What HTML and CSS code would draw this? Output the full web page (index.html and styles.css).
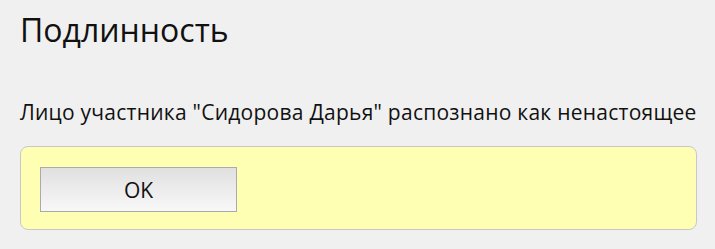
FILE: index.html
```html
<!DOCTYPE html>
<html lang="ru">
<head>
    <meta charset="UTF-8">
    <meta name="viewport" content="width=device-width, initial-scale=1.0">
    <title>Подлинность</title>
    <link rel="stylesheet" href="styles.css">
</head>
<body>
    <div class="dialog">
        <h1 class="title">Подлинность</h1>
        <p class="message">Лицо участника "Сидорова Дарья" распознано как ненастоящее</p>
        <div class="actions">
            <button class="ok-button">OK</button>
        </div>
    </div>
</body>
</html>
```

FILE: styles.css
```css
body {
    margin: 0;
    background-color: #f0f0f0;
    font-family: 'Open Sans', sans-serif;
    color: #111;
}
.dialog {
    padding: 8px 18px 0 20px;
}
.title {
    margin: 0;
    font-size: 32px;
    font-weight: normal;
    line-height: 44px;
}
.message {
    margin: 47px 0 0 0;
    font-size: 21px;
    letter-spacing: 0.25px;
    line-height: 26px;
    white-space: nowrap;
}
.actions {
    margin-top: 21px;
    padding: 20px 19px 17px 19px;
    background-color: #ffffb4;
    border: 1px solid #c8c8c8;
    border-radius: 8px;
}
.ok-button {
    display: block;
    width: 197px;
    height: 45px;
    font-family: 'Open Sans', sans-serif;
    font-size: 21px;
    color: #111;
    border: 1px solid #aaaaaa;
    background: linear-gradient(to bottom, #e0e0e0, #f8f8f8);
}
```
